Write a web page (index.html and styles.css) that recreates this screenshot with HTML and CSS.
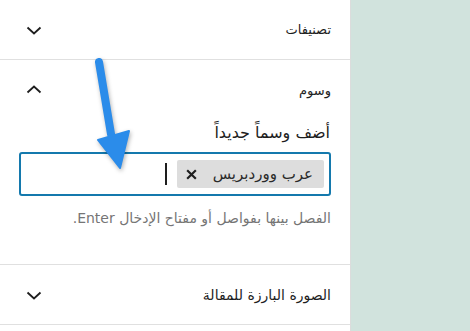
FILE: index.html
```html
<!DOCTYPE html>
<html lang="ar">
  <head>
    <meta charset="UTF-8" />
    <meta name="viewport" content="width=device-width, initial-scale=1.0" />
    <title>وسوم</title>
    <link rel="stylesheet" href="styles.css">
  </head>

  <body>
    <div class="screen">
      <aside class="panel" dir="rtl">
        <section class="box">
          <div class="box-head">
            <span>تصنيفات</span>
            <svg class="chev" viewBox="0 0 24 24"><path d="M5.5 9.5 12 15.5 18.5 9.5" /></svg>
          </div>
        </section>

        <section class="box">
          <div class="box-head">
            <span>وسوم</span>
            <svg class="chev" viewBox="0 0 24 24"><path d="M5.5 14.5 12 8.5 18.5 14.5" /></svg>
          </div>
          <div class="box-body">
            <label class="label">أضف وسماً جديداً</label>
            <div class="tag-input">
              <span class="chip">
                <span class="chip-text">عرب ووردبريس</span>
                <svg class="chip-x" viewBox="0 0 12 12"><path d="M2 2 10 10 M10 2 2 10" /></svg>
              </span>
              <span class="caret"></span>
            </div>
            <p class="help">الفصل بينها بفواصل أو مفتاح الإدخال Enter.</p>
          </div>
        </section>

        <section class="box">
          <div class="box-head">
            <span class="wide">الصورة البارزة للمقالة</span>
            <svg class="chev" viewBox="0 0 24 24"><path d="M5.5 9.5 12 15.5 18.5 9.5" /></svg>
          </div>
        </section>

        <!-- arrow pointing at the tag field -->
        <svg class="arrow" viewBox="0 0 60 130">
          <line x1="9" y1="10" x2="21" y2="82" />
          <polygon points="8,88 39,79 30,116" />
        </svg>
      </aside>
      <div class="backdrop"></div>
    </div>
  </body>
</html>
```

FILE: styles.css
```css
body {
  margin: 0;
  background: #ffffff;
  font-family: "DejaVu Sans", Tahoma, sans-serif;
  color: #1e1e1e;
}

.screen {
  display: flex;
  height: 331px;
  overflow: hidden;
}

.panel {
  position: relative;
  width: 350px;
  flex-shrink: 0;
  background: #ffffff;
  border-right: 1px solid #dcdcdc;
}

.backdrop {
  flex: 1;
  background: #d1e3dd;
}

.box {
  border-bottom: 1px solid #e0e0e0;
}

.box-head {
  height: 59px;
  display: flex;
  align-items: center;
  justify-content: space-between;
  padding: 0 19px 0 22px;
  font-size: 13px;
  color: #1e1e1e;
}

.box-head .wide {
  font-size: 14px;
  letter-spacing: 0.3px;
}

.box:nth-child(2) .box-head {
  height: 60px;
}

.chev {
  width: 24px;
  height: 24px;
  fill: none;
  stroke: #1e1e1e;
  stroke-width: 1.8;
}

.box-body {
  padding: 3px 19px 36px 19px;
}

.label {
  display: block;
  font-size: 16px;
  line-height: 20px;
  margin-bottom: 9px;
  padding-right: 1px;
}

.tag-input {
  height: 40px;
  border: 2px solid #1479ad;
  border-radius: 3px;
  display: flex;
  align-items: center;
  gap: 10px;
  padding: 0 5px;
}

.chip {
  height: 28px;
  display: flex;
  align-items: center;
  gap: 15px;
  padding: 0 11px 0 8px;
  background: #dddddd;
  border-radius: 2px;
  font-size: 15px;
  color: #2a2a2a;
}

.chip-x {
  width: 13px;
  height: 13px;
  stroke: #1e1e1e;
  stroke-width: 2;
}

.caret {
  width: 2px;
  height: 22px;
  background: #1e1e1e;
}

.help {
  margin: 12px 0 0;
  font-size: 14px;
  line-height: 20px;
  color: #757575;
}

.arrow {
  position: absolute;
  left: 90px;
  top: 52px;
  width: 60px;
  height: 130px;
  filter: drop-shadow(1px 2px 2px rgba(0, 0, 0, 0.3));
}

.arrow line {
  stroke: #2b8cea;
  stroke-width: 8;
  stroke-linecap: round;
}

.arrow polygon {
  fill: #2b8cea;
  stroke: #2b8cea;
  stroke-width: 2;
  stroke-linejoin: round;
}
```
